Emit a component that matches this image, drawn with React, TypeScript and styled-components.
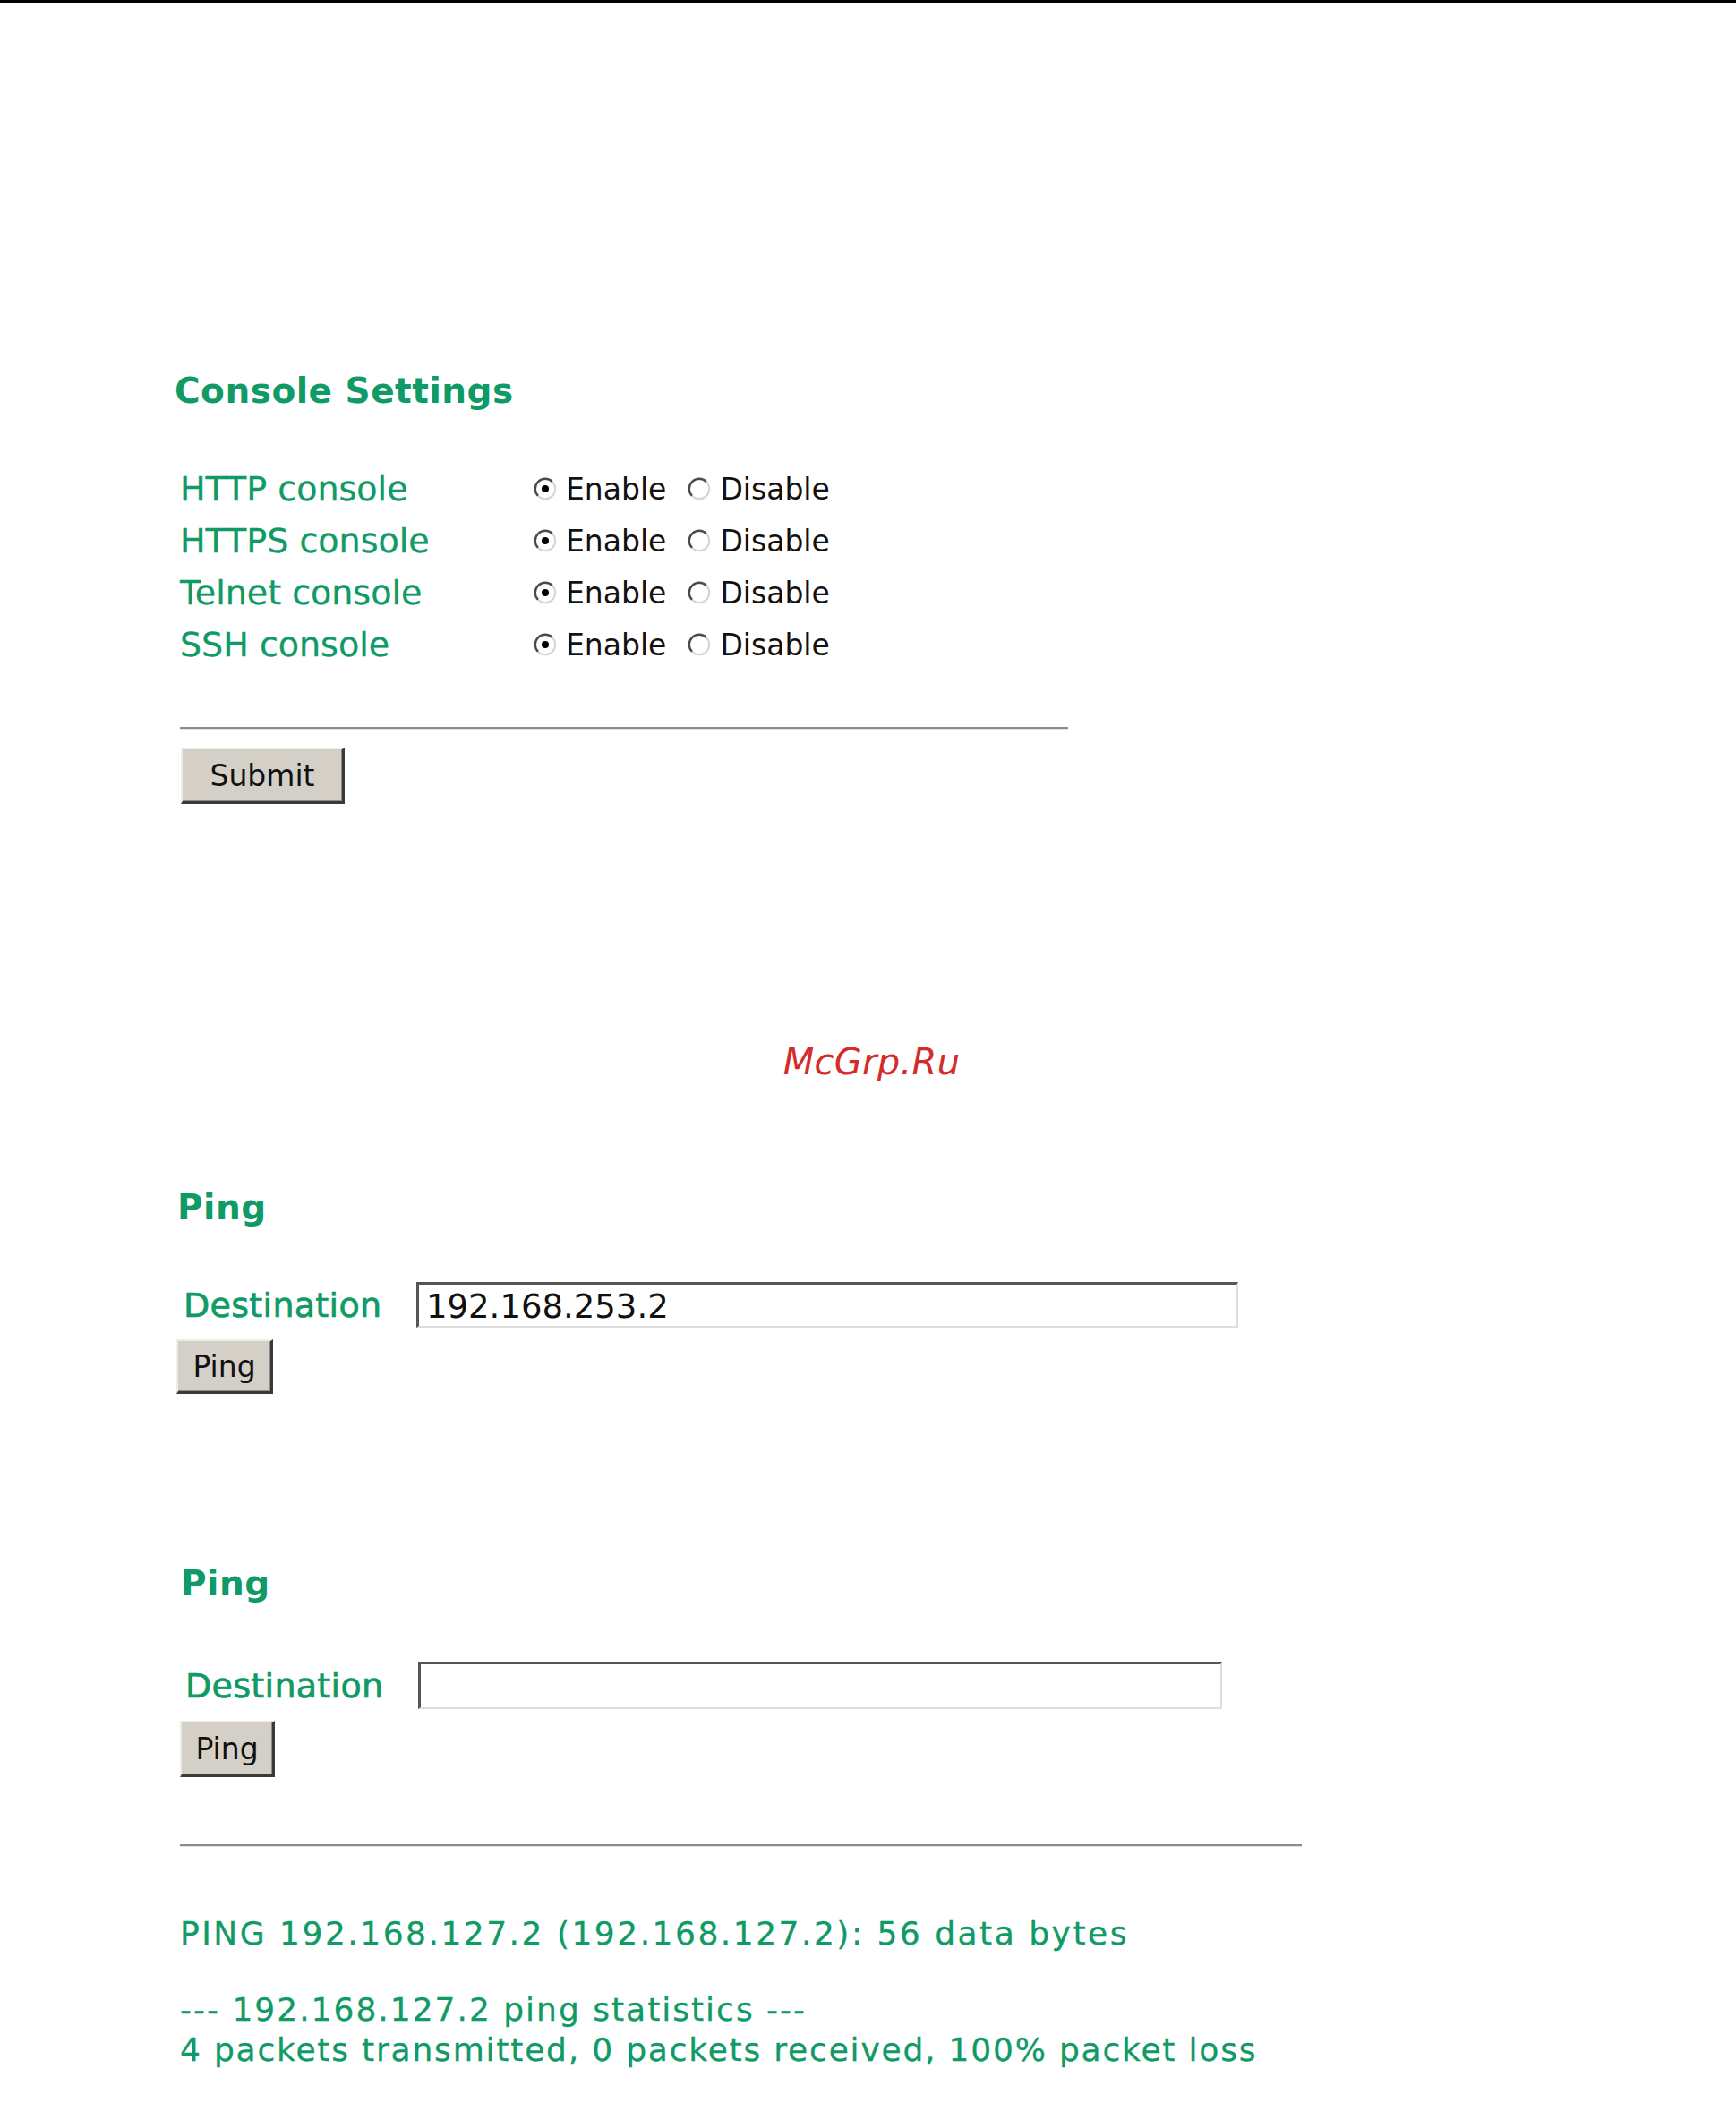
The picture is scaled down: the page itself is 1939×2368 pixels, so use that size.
import React from 'react';
import styled, { createGlobalStyle } from 'styled-components';

const green = '#0f9a66';

const GlobalStyle = createGlobalStyle`
  html, body {
    margin: 0;
    padding: 0;
    background: #fff;
  }
  body {
    font-family: 'DejaVu Sans', Verdana, sans-serif;
  }
`;

const Page = styled.div`
  border-top: 3px solid #000;
  padding-bottom: 60px;
  display: flex;
  flex-direction: column;
  align-items: flex-start;
`;

const Heading = styled.h2<{ $top: number; $left: number }>`
  margin: ${({ $top }) => $top}px 0 0 ${({ $left }) => $left}px;
  font-size: 39px;
  line-height: 48px;
  font-weight: 700;
  letter-spacing: 0.5px;
  color: ${green};
`;

const SettingsTable = styled.div`
  margin: 56px 0 0 201px;
  display: flex;
  flex-direction: column;
`;

const SettingRow = styled.div`
  display: flex;
  align-items: center;
  height: 58px;
`;

const SettingLabel = styled.div`
  width: 395px;
  font-size: 38px;
  line-height: 58px;
  color: ${green};
  -webkit-text-stroke: 0.3px ${green};
`;

const Options = styled.div`
  display: flex;
  align-items: center;
  gap: 24px;
`;

const Option = styled.label`
  display: flex;
  align-items: center;
  gap: 10px;
  font-size: 33px;
  color: #111;
`;

const Rule = styled.div<{ $top: number; $left: number; $width: number }>`
  margin: ${({ $top }) => $top}px 0 0 ${({ $left }) => $left}px;
  width: ${({ $width }) => $width}px;
  border-top: 2px solid #8c8c8c;
  border-bottom: 1px solid #e2e2e2;
`;

const ClassicButton = styled.button<{ $top: number; $left: number; $width: number; $height: number }>`
  margin: ${({ $top }) => $top}px 0 0 ${({ $left }) => $left}px;
  width: ${({ $width }) => $width}px;
  height: ${({ $height }) => $height}px;
  padding: 0;
  background: #d4d0c8;
  border-style: solid;
  border-width: 2px 3px 3px 2px;
  border-color: #eeece6 #3a3a3a #3a3a3a #eeece6;
  box-shadow: inset -1px -1px 0 #8a8a8a;
  font-family: 'DejaVu Sans', Verdana, sans-serif;
  font-size: 33px;
  color: #111;
`;

const Watermark = styled.div`
  align-self: stretch;
  margin-top: 264px;
  text-align: center;
  font-size: 40px;
  line-height: 48px;
  font-style: italic;
  letter-spacing: 0.3px;
  color: #d42b2b;
  padding-left: 8px;
`;

const DestRow = styled.div<{ $top: number; $left: number }>`
  margin: ${({ $top }) => $top}px 0 0 ${({ $left }) => $left}px;
  display: flex;
  align-items: center;
`;

const DestLabel = styled.div`
  width: 260px;
  font-size: 38px;
  letter-spacing: 0.3px;
  color: ${green};
  -webkit-text-stroke: 0.7px ${green};
`;

const TextBox = styled.input<{ $width: number; $height: number }>`
  box-sizing: border-box;
  width: ${({ $width }) => $width}px;
  height: ${({ $height }) => $height}px;
  padding: 2px 8px 0;
  border-style: solid;
  border-width: 3px 2px 2px 3px;
  border-color: #555 #dedede #dedede #555;
  background: #fff;
  font-family: 'DejaVu Sans', Verdana, sans-serif;
  font-size: 37px;
  color: #111;
  outline: none;
`;

const ResultLine = styled.div<{ $top: number; $spread: number }>`
  margin: ${({ $top }) => $top}px 0 0 201px;
  font-size: 36px;
  line-height: 45px;
  letter-spacing: ${({ $spread }) => $spread}px;
  color: ${green};
  -webkit-text-stroke: 0.3px ${green};
  white-space: pre;
`;

function RadioMark({ checked }: { checked: boolean }) {
  return (
    <svg width="26" height="26" viewBox="0 0 22 22">
      <path d="M4.28 17.72 A9.5 9.5 0 0 1 17.72 4.28" fill="none" stroke="#4a4a4a" strokeWidth="2" />
      <path d="M17.72 4.28 A9.5 9.5 0 0 1 4.28 17.72" fill="none" stroke="#d6d6d6" strokeWidth="1.8" />
      {checked && <circle cx="11" cy="11" r="3.4" fill="#000" />}
    </svg>
  );
}

const consoles = ['HTTP console', 'HTTPS console', 'Telnet console', 'SSH console'];

export default function App() {
  return (
    <>
      <GlobalStyle />
      <Page>
        <Heading $top={410} $left={195}>Console Settings</Heading>
        <SettingsTable>
          {consoles.map((name) => (
            <SettingRow key={name}>
              <SettingLabel>{name}</SettingLabel>
              <Options>
                <Option>
                  <RadioMark checked />
                  Enable
                </Option>
                <Option>
                  <RadioMark checked={false} />
                  Disable
                </Option>
              </Options>
            </SettingRow>
          ))}
        </SettingsTable>
        <Rule $top={63} $left={201} $width={992} />
        <ClassicButton $top={20} $left={202} $width={183} $height={63}>Submit</ClassicButton>

        <Watermark>McGrp.Ru</Watermark>

        <Heading $top={115} $left={198}>Ping</Heading>
        <DestRow $top={59} $left={205}>
          <DestLabel>Destination</DestLabel>
          <TextBox $width={918} $height={51} defaultValue="192.168.253.2" />
        </DestRow>
        <ClassicButton $top={13} $left={197} $width={108} $height={61}>Ping</ClassicButton>

        <Heading $top={188} $left={202}>Ping</Heading>
        <DestRow $top={63} $left={207}>
          <DestLabel>Destination</DestLabel>
          <TextBox $width={898} $height={53} defaultValue="" />
        </DestRow>
        <ClassicButton $top={13} $left={201} $width={106} $height={63}>Ping</ClassicButton>

        <Rule $top={75} $left={201} $width={1253} />
        <ResultLine $top={74} $spread={2.5}>PING 192.168.127.2 (192.168.127.2): 56 data bytes</ResultLine>
        <ResultLine $top={40} $spread={2}>--- 192.168.127.2 ping statistics ---</ResultLine>
        <ResultLine $top={0} $spread={1.8}>4 packets transmitted, 0 packets received, 100% packet loss</ResultLine>
      </Page>
    </>
  );
}
